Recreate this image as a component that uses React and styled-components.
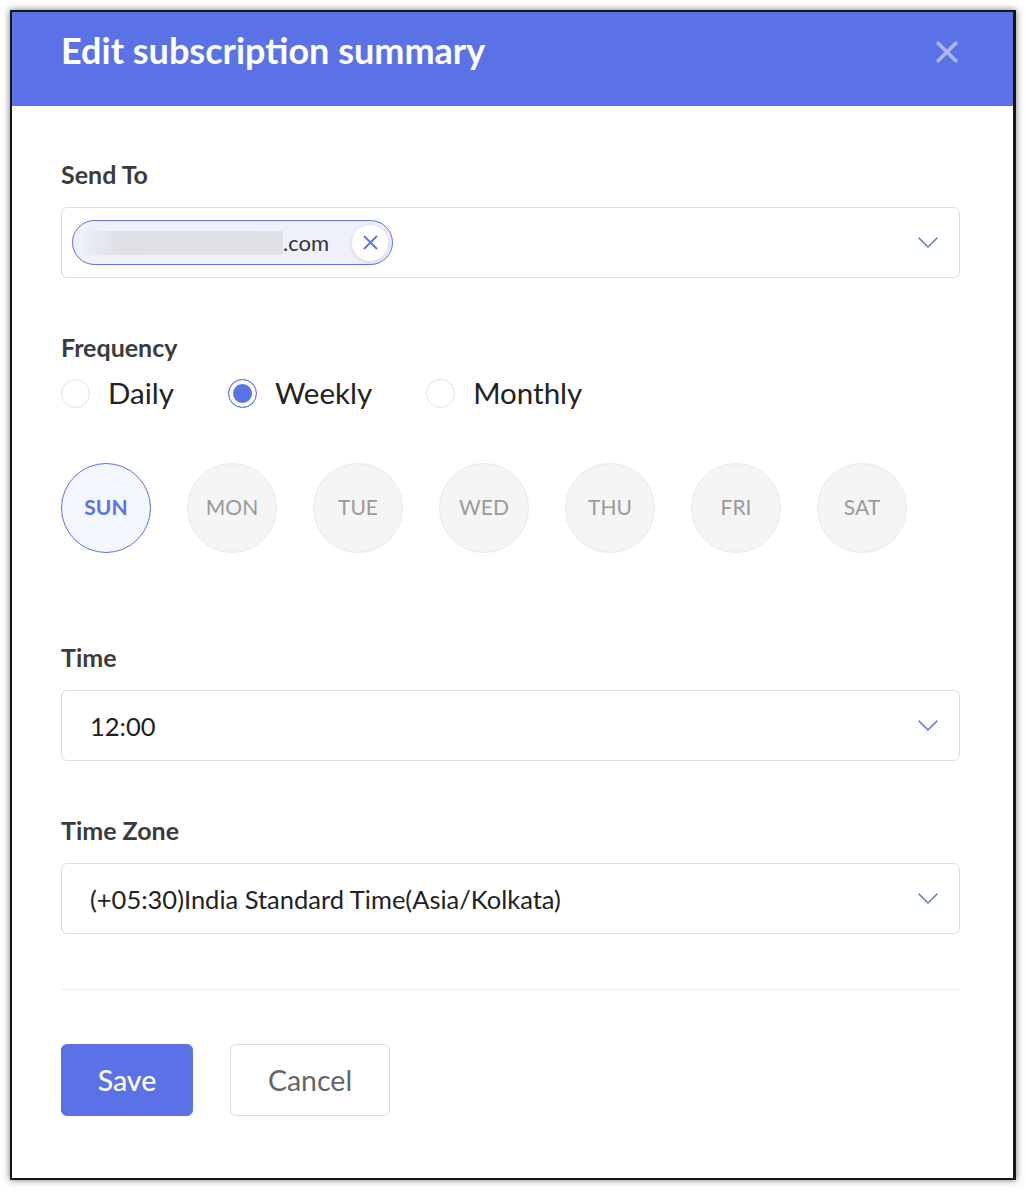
import React from "react";
import styled, { createGlobalStyle } from "styled-components";

const GlobalStyle = createGlobalStyle`
  body {
    margin: 0;
    background: #ffffff;
    font-family: Lato, "Open Sans", sans-serif;
  }
  * {
    box-sizing: border-box;
  }
`;

const DAYS = ["SUN", "MON", "TUE", "WED", "THU", "FRI", "SAT"];
const FREQUENCIES = ["Daily", "Weekly", "Monthly"];

const Chevron = () => (
  <svg width="20" height="11" viewBox="0 0 20 11" fill="none">
    <path d="M1 1l9 9 9-9" stroke="#5b71e6" strokeWidth="1.5" strokeLinecap="round" strokeLinejoin="round" />
  </svg>
);

const Cross = ({ size, color, width }) => (
  <svg width={size} height={size} viewBox="0 0 20 20" fill="none">
    <path d="M2 2l16 16M18 2L2 18" stroke={color} strokeWidth={width} strokeLinecap="round" />
  </svg>
);

const App = () => {
  return (
    <Frame>
      <GlobalStyle />
      <Modal>
        <Header>
          <Title>Edit subscription summary</Title>
          <CloseButton aria-label="Close">
            <Cross size={22} color="rgba(255,255,255,0.5)" width={3.2} />
          </CloseButton>
        </Header>

        <Body>
          <Section>
            <Label>Send To</Label>
            <SelectBox>
              <Chip>
                <Blurred />
                <ChipText>.com</ChipText>
                <ChipRemove>
                  <Cross size={15} color="#5b71e6" width={2.4} />
                </ChipRemove>
              </Chip>
              <Chevron />
            </SelectBox>
          </Section>

          <Section>
            <Label>Frequency</Label>
            <RadioRow>
              {FREQUENCIES.map((f) => (
                <RadioItem key={f}>
                  <RadioCircle $checked={f === "Weekly"} />
                  <span>{f}</span>
                </RadioItem>
              ))}
            </RadioRow>
            <DayRow>
              {DAYS.map((d) => (
                <DayCircle key={d} $active={d === "SUN"}>
                  {d}
                </DayCircle>
              ))}
            </DayRow>
          </Section>

          <Section>
            <Label>Time</Label>
            <SelectBox $text>
              <Value>12:00</Value>
              <Chevron />
            </SelectBox>
          </Section>

          <Section>
            <Label>Time Zone</Label>
            <SelectBox $text>
              <Value>(+05:30)India Standard Time(Asia/Kolkata)</Value>
              <Chevron />
            </SelectBox>
          </Section>

          <Divider />

          <Actions>
            <Button $primary>Save</Button>
            <Button>Cancel</Button>
          </Actions>
        </Body>
      </Modal>
    </Frame>
  );
};

const Frame = styled.div`
  padding: 10px;
  width: 1026px;
`;

const Modal = styled.div`
  width: 1006px;
  border: 2px solid #151515;
  border-right-width: 3px;
  background: #ffffff;
  box-shadow: 0 0 7px rgba(0, 0, 0, 0.55);
`;

const Header = styled.div`
  height: 94px;
  background: #5b71e6;
  display: flex;
  align-items: flex-start;
  justify-content: space-between;
  padding: 17px 55px 0 49px;
`;

const Title = styled.h1`
  margin: 0;
  color: #ffffff;
  font-family: Lato, sans-serif;
  font-size: 36px;
  line-height: 43px;
  font-weight: 700;
`;

const CloseButton = styled.button`
  border: 0;
  background: none;
  padding: 0;
  margin-top: 12px;
  display: flex;
  cursor: pointer;
`;

const Body = styled.div`
  padding: 52px 53px 62px 49px;
  display: flex;
  flex-direction: column;
`;

const Section = styled.div`
  display: flex;
  flex-direction: column;
  margin-bottom: 53px;
`;

const Label = styled.div`
  font-family: Lato, sans-serif;
  font-weight: 700;
  font-size: 25px;
  line-height: 30px;
  color: #3b3b3b;
  padding-top: 1px;
  margin-bottom: 18px;
`;

const SelectBox = styled.div`
  height: 71px;
  border: 1px solid #dcdcdc;
  border-radius: 6px;
  display: flex;
  align-items: center;
  justify-content: space-between;
  padding: 0 21px 0 ${(p) => (p.$text ? "28px" : "10px")};
`;

const Value = styled.span`
  font-family: Lato, sans-serif;
  font-size: 25.5px;
  color: #222222;
`;

const Chip = styled.div`
  height: 45px;
  width: 321px;
  border: 1px solid #5b71e6;
  border-radius: 23px;
  background: #eef0fb;
  display: flex;
  align-items: center;
  padding: 0 4px 0 12px;
`;

const Blurred = styled.span`
  width: 198px;
  height: 24px;
  background: linear-gradient(90deg, rgba(222, 223, 230, 0.2) 0%, #dfe0e6 18%, #e1e2e8 100%);
`;

const ChipText = styled.span`
  font-family: Lato, sans-serif;
  font-size: 22px;
  color: #333333;
  flex: 1;
`;

const ChipRemove = styled.span`
  width: 36px;
  height: 36px;
  border-radius: 50%;
  background: #ffffff;
  box-shadow: 0 1px 4px rgba(0, 0, 0, 0.14);
  display: flex;
  align-items: center;
  justify-content: center;
`;

const RadioRow = styled.div`
  display: flex;
  align-items: center;
  gap: 54px;
  margin-top: -5px;
  height: 36px;
`;

const RadioItem = styled.label`
  display: flex;
  align-items: center;
  gap: 18px;
  font-family: Lato, sans-serif;
  font-size: 29.5px;
  line-height: 36px;
  color: #222222;
`;

const RadioCircle = styled.span`
  width: 29px;
  height: 29px;
  border-radius: 50%;
  border: ${(p) => (p.$checked ? "1.5px solid #5b71e6" : "1px solid #dfe2f5")};
  background: ${(p) => (p.$checked ? "#5b71e6" : "#ffffff")};
  box-shadow: ${(p) => (p.$checked ? "inset 0 0 0 4px #ffffff" : "none")};
`;

const DayRow = styled.div`
  display: flex;
  gap: 36px;
  margin-top: 52px;
  margin-bottom: 35px;
`;

const DayCircle = styled.div`
  width: 90px;
  height: 90px;
  border-radius: 50%;
  display: flex;
  align-items: center;
  justify-content: center;
  padding-bottom: 3px;
  font-family: Lato, sans-serif;
  font-size: 21px;
  font-weight: ${(p) => (p.$active ? 700 : 400)};
  color: ${(p) => (p.$active ? "#5b71e6" : "#9a9a9a")};
  background: ${(p) => (p.$active ? "#f5f7fe" : "#f5f5f5")};
  border: 1px solid ${(p) => (p.$active ? "#5b71e6" : "#e9e9e9")};
`;

const Divider = styled.div`
  height: 1px;
  background: #ececec;
  margin-top: 2px;
  margin-bottom: 54px;
`;

const Actions = styled.div`
  display: flex;
  gap: 37px;
`;

const Button = styled.button`
  height: 72px;
  width: ${(p) => (p.$primary ? "132px" : "160px")};
  border-radius: 6px;
  border: 1px solid ${(p) => (p.$primary ? "#5b71e6" : "#dcdcdc")};
  background: ${(p) => (p.$primary ? "#5b71e6" : "#ffffff")};
  color: ${(p) => (p.$primary ? "#ffffff" : "#666666")};
  font-family: Lato, sans-serif;
  font-size: 28.5px;
  font-weight: ${(p) => (p.$primary ? 500 : 400)};
  cursor: pointer;
`;

export default App;
